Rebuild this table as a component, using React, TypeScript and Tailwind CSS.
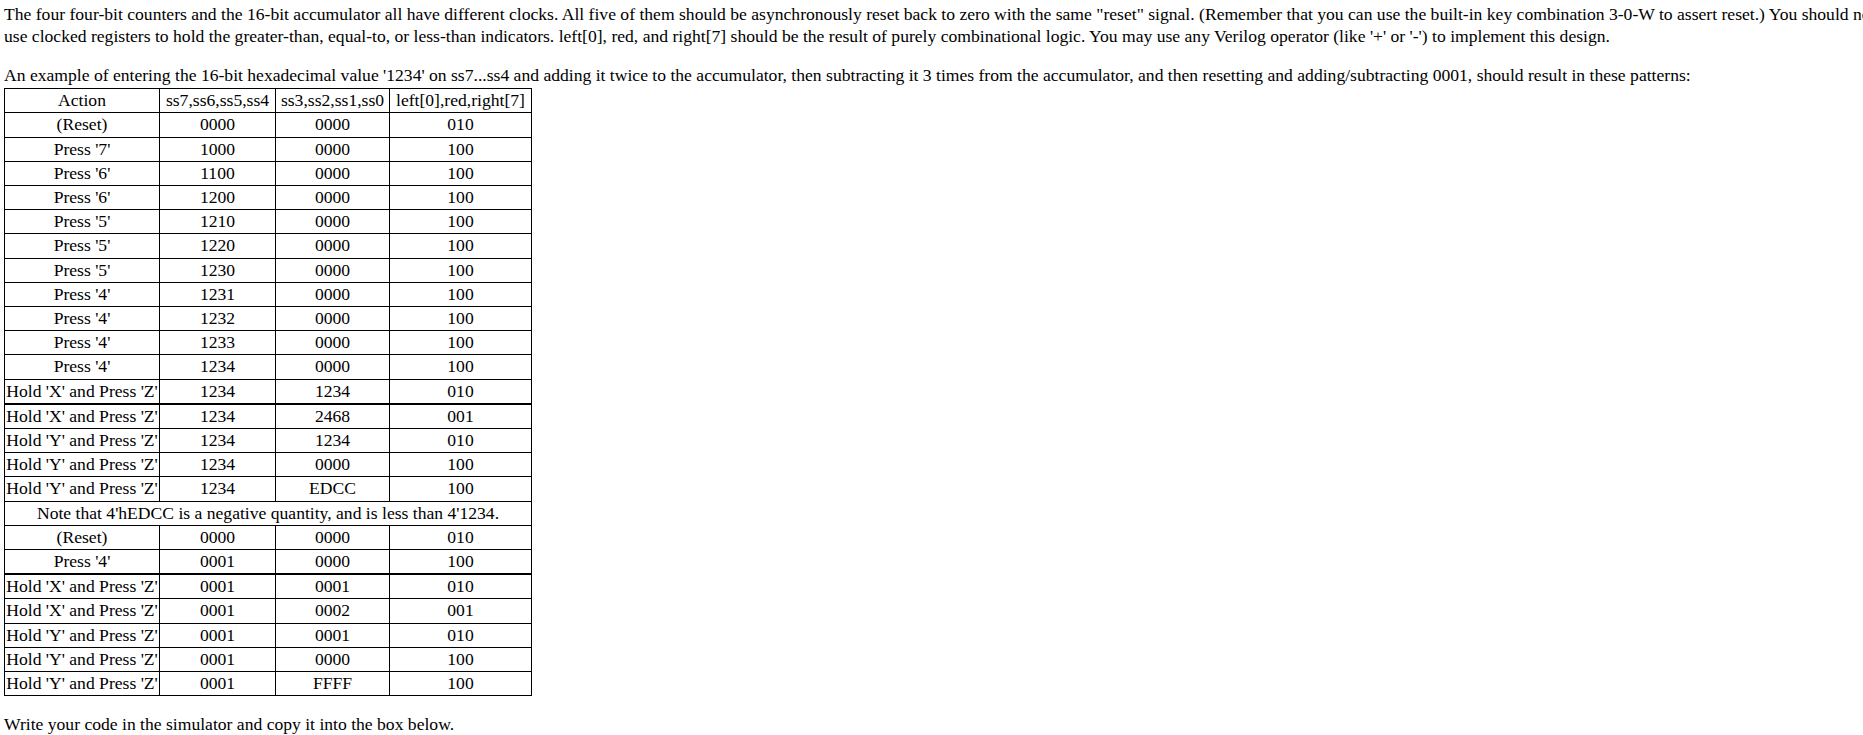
import React from "react";

type Row = [string, string, string, string];

const part1: Row[] = [
  ["(Reset)", "0000", "0000", "010"],
  ["Press '7'", "1000", "0000", "100"],
  ["Press '6'", "1100", "0000", "100"],
  ["Press '6'", "1200", "0000", "100"],
  ["Press '5'", "1210", "0000", "100"],
  ["Press '5'", "1220", "0000", "100"],
  ["Press '5'", "1230", "0000", "100"],
  ["Press '4'", "1231", "0000", "100"],
  ["Press '4'", "1232", "0000", "100"],
  ["Press '4'", "1233", "0000", "100"],
  ["Press '4'", "1234", "0000", "100"],
  ["Hold 'X' and Press 'Z'", "1234", "1234", "010"],
];

const part2: Row[] = [
  ["Hold 'X' and Press 'Z'", "1234", "2468", "001"],
  ["Hold 'Y' and Press 'Z'", "1234", "1234", "010"],
  ["Hold 'Y' and Press 'Z'", "1234", "0000", "100"],
  ["Hold 'Y' and Press 'Z'", "1234", "EDCC", "100"],
];

const part3: Row[] = [
  ["(Reset)", "0000", "0000", "010"],
  ["Press '4'", "0001", "0000", "100"],
];

const part4: Row[] = [
  ["Hold 'X' and Press 'Z'", "0001", "0001", "010"],
  ["Hold 'X' and Press 'Z'", "0001", "0002", "001"],
  ["Hold 'Y' and Press 'Z'", "0001", "0001", "010"],
  ["Hold 'Y' and Press 'Z'", "0001", "0000", "100"],
  ["Hold 'Y' and Press 'Z'", "0001", "FFFF", "100"],
];

function Cells({ r, thick }: { r: Row; thick?: boolean }) {
  const b = thick
    ? "border border-black border-b-2 px-0 py-px text-center leading-[21.2px] whitespace-nowrap"
    : "border border-black px-0 py-px text-center leading-[21.2px] whitespace-nowrap";
  return (
    <tr>
      {r.map((c, i) => (
        <td key={i} className={b}>
          {c}
        </td>
      ))}
    </tr>
  );
}

export default function App() {
  return (
    <div className="w-screen h-screen overflow-hidden bg-white text-black font-['Liberation_Serif','Times_New_Roman',serif] text-[17.6px] leading-[21.7px] pt-[4px] pl-[4px]">
      <p className="whitespace-nowrap">
        The four four-bit counters and the 16-bit accumulator all have different clocks. All five of them should be asynchronously reset back to zero with the same "reset" signal. (Remember that you can use the built-in key combination 3-0-W to assert reset.) You should not
        <br />
        use clocked registers to hold the greater-than, equal-to, or less-than indicators. left[0], red, and right[7] should be the result of purely combinational logic. You may use any Verilog operator (like '+' or '-') to implement this design.
      </p>
      <p className="whitespace-nowrap mt-[18px]">
        An example of entering the 16-bit hexadecimal value '1234' on ss7...ss4 and adding it twice to the accumulator, then subtracting it 3 times from the accumulator, and then resetting and adding/subtracting 0001, should result in these patterns:
      </p>
      <table className="border-collapse table-fixed w-[527px] mt-px">
        <colgroup>
          <col className="w-[155px]" />
          <col className="w-[116px]" />
          <col className="w-[114px]" />
          <col className="w-[142px]" />
        </colgroup>
        <tbody>
          <Cells r={["Action", "ss7,ss6,ss5,ss4", "ss3,ss2,ss1,ss0", "left[0],red,right[7]"]} />
          {part1.map((r, i) => (
            <Cells key={"a" + i} r={r} thick={i === part1.length - 1} />
          ))}
          {part2.map((r, i) => (
            <Cells key={"b" + i} r={r} />
          ))}
          <tr>
            <td colSpan={4} className="border border-black px-0 py-px text-center leading-[21.2px] whitespace-nowrap">
              Note that 4'hEDCC is a negative quantity, and is less than 4'1234.
            </td>
          </tr>
          {part3.map((r, i) => (
            <Cells key={"c" + i} r={r} thick={i === part3.length - 1} />
          ))}
          {part4.map((r, i) => (
            <Cells key={"d" + i} r={r} />
          ))}
        </tbody>
      </table>
      <p className="whitespace-nowrap mt-[18px]">Write your code in the simulator and copy it into the box below.</p>
    </div>
  );
}
